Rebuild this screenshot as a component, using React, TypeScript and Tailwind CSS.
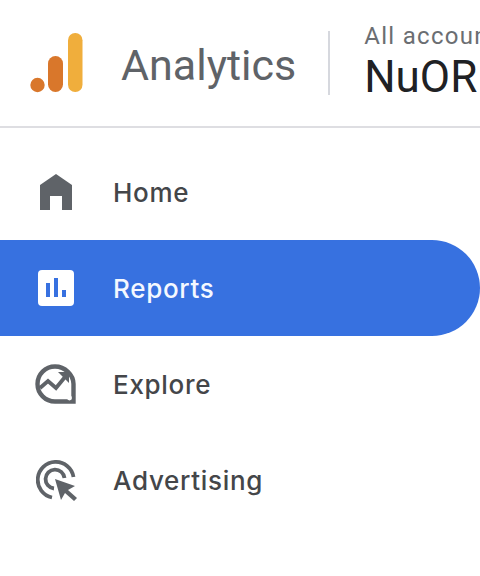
import React from "react";

const font = { fontFamily: '"Roboto", "Liberation Sans", sans-serif' };
const navFont = { fontFamily: '"Inter", "Roboto", sans-serif' };

function Logo() {
  return (
    <svg width="54" height="62" viewBox="0 0 54 62" className="shrink-0">
      <circle cx="7.5" cy="53" r="7.2" fill="#D9772B" />
      <rect x="18" y="24" width="15" height="36" rx="7.5" fill="#D9772B" />
      <rect x="38" y="1" width="14.5" height="59" rx="7.2" fill="#F0AE3C" />
    </svg>
  );
}

function HomeIcon() {
  return (
    <svg width="36" height="36" viewBox="0 0 36 36" className="ml-[4px]">
      <path d="M16 0 L32 11 V36 H22 V22 H10 V36 H0 V11 Z" fill="#5F6368" />
    </svg>
  );
}

function ReportsIcon() {
  return (
    <svg width="36" height="36" viewBox="0 0 36 36" className="ml-[2px]">
      <rect x="0" y="0" width="36" height="36" rx="4" fill="#fff" />
      <rect x="8" y="13" width="4" height="14" fill="#3771E0" />
      <rect x="16" y="8" width="4" height="19" fill="#3771E0" />
      <rect x="24" y="20" width="4" height="7" fill="#3771E0" />
    </svg>
  );
}

function ExploreIcon() {
  return (
    <svg width="42" height="40" viewBox="0 0 42 40" fill="none" className="-ml-[1px]">
      <path d="M20 2.5 C30 2.5 38.5 11 38.5 20 V37.5 H20 A17.5 17.5 0 0 1 20 2.5 Z" stroke="#5F6368" strokeWidth="4.4" />
      <path d="M5 24 L13 17 L21 24 L30 13" stroke="#5F6368" strokeWidth="3.8" />
      <path d="M23 8 H34 V19 Z" fill="#5F6368" />
      <circle cx="34.5" cy="34" r="2.4" fill="#fff" />
    </svg>
  );
}

function AdvertisingIcon() {
  return (
    <svg width="42" height="41" viewBox="0 0 42 41" fill="none">
      <path d="M16 37.5 A18 18 0 1 1 37.5 17" stroke="#5F6368" strokeWidth="3.8" />
      <path d="M18 28.5 A9.5 9.5 0 1 1 28.5 18" stroke="#5F6368" strokeWidth="3.8" />
      <path d="M19 19 L39 26 L32 30 L41 38 L38 41 L29 33 L25 40 Z" fill="#5F6368" />
    </svg>
  );
}

function Row({ icon, label, active }: { icon: React.ReactNode; label: string; active?: boolean }) {
  return (
    <div
      className={
        "flex h-24 w-full items-center rounded-r-[48px] " +
        (active ? "bg-[#3771E0] text-[#F4F8FF]" : "text-[#444649]")
      }
    >
      <div className="flex w-[113px] shrink-0 items-center pl-[36px]">{icon}</div>
      <span className="text-[26px] font-medium tracking-[0.7px]" style={navFont}>{label}</span>
    </div>
  );
}

export default function App() {
  return (
    <div className="h-[576px] w-[480px] overflow-hidden bg-white" style={font}>
      <header className="flex h-[128px] items-center border-b-2 border-[#DEDEE2] pl-[30px]">
        <Logo />
        <span className="ml-[37px] mt-[4px] whitespace-nowrap text-[43px] leading-none text-[#5F6368]">Analytics</span>
        <div className="ml-[32px] h-[64px] w-[2px] shrink-0 bg-[#D6D8DE]" />
        <div className="ml-[34px] flex flex-col whitespace-nowrap">
          <span className="-mt-[4px] text-[24px] leading-[30px] tracking-[1.3px] text-[#6B6E72]">All accounts</span>
          <span className="mt-[1px] text-[44px] leading-[50px] text-[#202124]">NuORDER</span>
        </div>
      </header>
      <nav className="flex flex-col pt-4 pr-0">
        <Row icon={<HomeIcon />} label="Home" />
        <Row icon={<ReportsIcon />} label="Reports" active />
        <Row icon={<ExploreIcon />} label="Explore" />
        <Row icon={<AdvertisingIcon />} label="Advertising" />
      </nav>
    </div>
  );
}
